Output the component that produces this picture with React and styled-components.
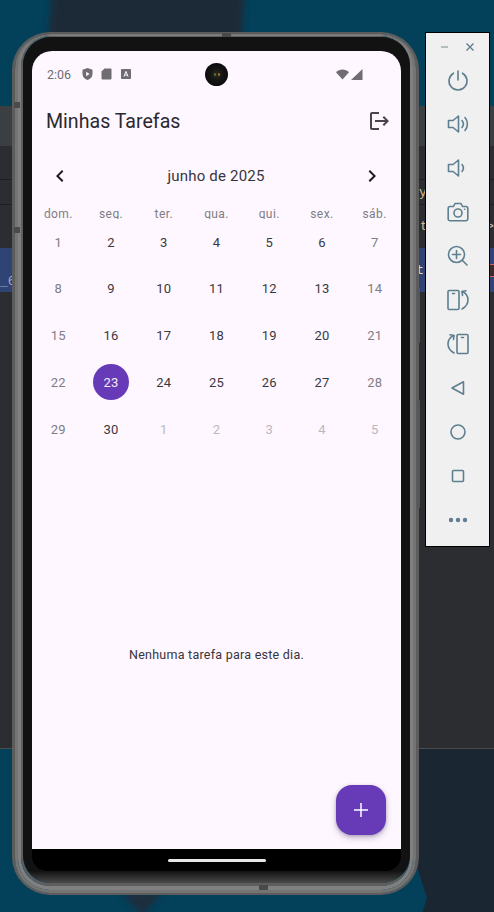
import React from "react";
import styled, { createGlobalStyle } from "styled-components";

const Global = createGlobalStyle`
  html, body { margin: 0; padding: 0; background: #02415a; }
  * { box-sizing: border-box; }
`;

const Desktop = styled.div`
  position: relative;
  width: 494px;
  height: 912px;
  overflow: hidden;
  font-family: Roboto, "Liberation Sans", sans-serif;
`;
const Wallpaper = styled.svg`
  position: absolute;
  inset: 0;
`;

/* IDE window behind the emulator */
const IdeWindow = styled.div`
  position: absolute;
  left: 0;
  top: 106px;
  width: 494px;
  height: 643px;
  background: #2b2d30;
  border-bottom: 1px solid #4a4c4f;
  display: flex;
  flex-direction: column;
  font-family: "Liberation Mono", monospace;
  font-size: 13px;
`;
const IdeToolbar = styled.div`
  height: 40px;
  background: #3c3f41;
`;
const IdeRow = styled.div`
  height: ${(p) => p.$h}px;
  background: ${(p) => p.$bg || "#2b2d30"};
  border-bottom: ${(p) => (p.$line ? "1px solid #1e1f22" : "none")};
  display: flex;
  align-items: center;
  justify-content: space-between;
  padding-left: ${(p) => p.$pl || 0}px;
  color: ${(p) => p.$color || "#b4b8bf"};
`;
const RedMark = styled.span`
  width: 4px;
  height: 13px;
  background: #3c2a2c;
  border-top: 1px solid #d8605c;
  border-bottom: 1px solid #d8605c;
`;
const Fragment = styled.span`
  color: ${(p) => p.$color || "#dfe1e5"};
`;
const BandLabel = styled.span`
  align-self: flex-end;
  padding-bottom: 3px;
`;
const BandFragment = styled.span`
  margin-left: auto;
  margin-right: 66px;
  color: #e6dcc8;
`;

/* Phone */
const Rim = styled.div`
  background: transparent;
  border-style: solid;
  border-color: ${(p) => p.$c};
  border-width: ${(p) => p.$w};
  border-radius: ${(p) => p.$r}px;
`;
const PhoneSpot = styled.div`
  position: absolute;
  left: 12px;
  top: 32px;
  width: 407px;
  height: 863px;
`;
const SideButton = styled.div`
  position: absolute;
  left: 405px;
  top: ${(p) => p.$top}px;
  width: 3px;
  height: ${(p) => p.$h}px;
  background: #55575a;
  border-radius: 1px;
`;
const AntennaBand = styled.div`
  position: absolute;
  background: #4a4a4a;
  left: ${(p) => p.$x}px;
  top: ${(p) => p.$y}px;
  width: ${(p) => p.$w}px;
  height: ${(p) => p.$hh}px;
`;
const Bezel = styled.div`
  padding: 14px 9px 12px 9px;
  border-radius: 28px;
  background: linear-gradient(to bottom, #121212 0, #121212 calc(100% - 12px), #4a4a4a 100%);
`;
const ScreenClip = styled.div`
  width: 369px;
  height: 820px;
  border-radius: 20px 20px 15px 15px;
  overflow: hidden;
  background: #000;
  display: flex;
  flex-direction: column;
`;
const Screen = styled.div`
  position: relative;
  height: 798px;
  background: #fef7ff;
  display: flex;
  flex-direction: column;
  color: #1d1b20;
`;
const NavBar = styled.div`
  flex: 1;
  display: flex;
  align-items: center;
  justify-content: center;
`;
const NavHandle = styled.div`
  width: 98px;
  height: 3px;
  border-radius: 2px;
  background: #e6e6e6;
`;
const StatusBar = styled.div`
  height: 46px;
  display: flex;
  align-items: center;
  padding: 0 38px 0 15px;
  position: relative;
  color: #6f6c72;
`;
const Clock = styled.span`
  font-size: 12.5px;
  width: 35px;
`;
const StatusIcons = styled.div`
  display: flex;
  align-items: center;
  gap: 8px;
`;
const StatusRight = styled.div`
  margin-left: auto;
  display: flex;
  align-items: center;
  gap: 2px;
`;
const Camera = styled.div`
  position: absolute;
  left: 173px;
  top: 11.5px;
  width: 23px;
  height: 23px;
  border-radius: 50%;
  background: radial-gradient(circle, #2b2a20 0, #141414 40%, #050505 100%);
  display: flex;
  align-items: center;
  justify-content: center;
  gap: 2px;
`;
const Lens = styled.i`
  width: 2px;
  height: 3px;
  border-radius: 1px;
  background: ${(p) => p.$c};
`;
const AppBar = styled.div`
  height: 48px;
  display: flex;
  align-items: center;
  justify-content: space-between;
  padding: 0 10px 0 14px;
`;
const Title = styled.h1`
  margin: 0;
  padding-top: 1px;
  font-size: 19.6px;
  font-weight: 400;
  color: #2a2830;
`;
const Calendar = styled.div`
  margin-top: 7px;
  display: flex;
  flex-direction: column;
`;
const MonthHeader = styled.div`
  height: 48px;
  display: flex;
  align-items: center;
  justify-content: space-between;
  padding: 0 17px 0 16px;
  margin-bottom: 5px;
`;
const MonthLabel = styled.span`
  font-size: 15px;
  letter-spacing: 0.2px;
  color: #37353b;
`;
const Week = styled.div`
  display: grid;
  grid-template-columns: repeat(7, 1fr);
  height: 14px;
  margin-bottom: 4px;
  overflow: hidden;
  line-height: 18px;
  text-align: center;
  font-size: 12px;
  letter-spacing: 0.4px;
  color: #807d84;
`;
const Days = styled.div`
  display: grid;
  grid-template-columns: repeat(7, 1fr);
  grid-auto-rows: 36px;
  row-gap: 10.75px;
  margin-top: 1px;
`;
const Day = styled.div`
  justify-self: center;
  width: 36px;
  height: 36px;
  border-radius: 50%;
  display: flex;
  align-items: center;
  justify-content: center;
  font-size: 13px;
  letter-spacing: 0.2px;
  background: ${(p) => (p.$selected ? "#673ab7" : "transparent")};
  color: ${(p) =>
    p.$selected ? "#f3ecfb" : p.$outside ? "#bbb8bd" : p.$weekend ? "#807d84" : "#3a383f"};
`;
const EmptyArea = styled.div`
  flex: 1;
  display: flex;
  align-items: center;
  justify-content: center;
  padding-top: 12px;
  font-size: 12.5px;
  letter-spacing: 0.25px;
  color: #37353b;
`;
const Fab = styled.button`
  position: absolute;
  right: 15px;
  bottom: 14px;
  width: 50px;
  height: 50px;
  border: none;
  padding: 0;
  border-radius: 16px;
  background: #673ab7;
  box-shadow: 0 3px 6px rgba(60, 40, 90, 0.28), 0 1px 3px rgba(60, 40, 90, 0.25);
  display: flex;
  align-items: center;
  justify-content: center;
`;

/* Emulator side toolbar */
const SidePanel = styled.div`
  position: absolute;
  left: 425px;
  top: 32px;
  width: 65px;
  height: 515px;
  background: #f0f0f0;
  border: 1px solid #000;
  display: flex;
  flex-direction: column;
  align-items: center;
`;
const PanelHead = styled.div`
  height: 25px;
  width: 100%;
  display: flex;
  align-items: center;
  justify-content: space-between;
  padding: 3px 14px 0 14px;
`;
const ToolButton = styled.div`
  width: 44px;
  height: 44px;
  display: flex;
  align-items: center;
  justify-content: center;
`;

const tool = { fill: "none", stroke: "#5e7f90", strokeWidth: 1.6, strokeLinecap: "round", strokeLinejoin: "round" };
const ToolIcon = ({ children }) => (
  <ToolButton>
    <svg width="26" height="26" viewBox="0 0 26 26" {...tool}>
      {children}
    </svg>
  </ToolButton>
);

const weekNames = ["dom.", "seg.", "ter.", "qua.", "qui.", "sex.", "sáb."];
const cells = [];
for (let i = 1; i <= 30; i++) cells.push({ n: i, outside: false });
for (let i = 1; i <= 5; i++) cells.push({ n: i, outside: true });

export default function App() {
  return (
    <Desktop>
      <Global />
      <Wallpaper width="494" height="912" viewBox="0 0 494 912">
        <defs>
          <filter id="soft"><feGaussianBlur stdDeviation="3" /></filter>
        </defs>
        <rect width="494" height="912" fill="#03405a" />
        <g filter="url(#soft)">
          <polygon points="52,-10 245,-10 240,60 225,110 70,110 48,40" fill="#1d2b38" />
          <polygon points="122,893 162,893 142,916" fill="#1f2d3c" />
        </g>
        <polygon points="410,745 500,745 500,920 420,920 427,898 418,870" fill="#1a2733" />
      </Wallpaper>

      <IdeWindow>
        <IdeToolbar />
        <IdeRow $h={34} $line />
        <IdeRow $h={25} $line $pl={419}>
          <Fragment $color="#d8c08a">yp</Fragment>
        </IdeRow>
        <IdeRow $h={43} $pl={420}>
          <Fragment $color="#e6b98a">t</Fragment>
          <Fragment $color="#b9bcc2">&gt;</Fragment>
        </IdeRow>
        <IdeRow $h={44} $bg="#2f4374" $color="#9aa9c9">
          <BandLabel>_6</BandLabel>
          <BandFragment>t</BandFragment>
          <RedMark />
        </IdeRow>
      </IdeWindow>

      <PhoneSpot>
        <SideButton $top={256} $h={55} />
        <SideButton $top={368} $h={108} />
        <Rim $c="#5c5c5c" $w="2px 3px 2px 3px" $r={38}>
          <Rim $c="#747474" $w="1px 3px 3px 3px" $r={35}>
            <Rim $c="#808080" $w="1px 3px 4px 3px" $r={32}>
              <Rim $c="#5e5e5e" $w="1px 0 3px 2px" $r={29}>
                <Bezel>
                  <ScreenClip>
                    <Screen>
                      <StatusBar>
                        <Clock>2:06</Clock>
                        <StatusIcons>
                          <svg width="11" height="12" viewBox="0 0 11 12">
                            <path d="M5.5 0 10.5 1.8V6c0 2.8-2 5-5 6-3-1-5-3.2-5-6V1.8z" fill="#6f6c72" />
                            <path d="M4.2 3.8 7.6 6 4.2 8.2z" fill="#fef7ff" />
                          </svg>
                          <svg width="11" height="12" viewBox="0 0 11 12">
                            <path d="M3.5 0.5H9.5a1 1 0 0 1 1 1V10.5a1 1 0 0 1-1 1H1.5a1 1 0 0 1-1-1V3.5z" fill="#6f6c72" />
                          </svg>
                          <svg width="10" height="10" viewBox="0 0 10 10" style={{ marginLeft: 1 }}>
                            <rect width="10" height="10" rx="1" fill="#6f6c72" />
                            <path d="M3 7.6 5 2.4 7 7.6M3.8 6h2.4" fill="none" stroke="#fef7ff" strokeWidth="1" />
                          </svg>
                        </StatusIcons>
                        <Camera>
                          <Lens $c="#5d6a3a" />
                          <Lens $c="#9a6a30" />
                        </Camera>
                        <StatusRight>
                          <svg width="13" height="11" viewBox="0 0 13 11">
                            <path d="M0 3.2C1.8 1.4 4 .4 6.5.4S11.2 1.4 13 3.2L6.5 10.6z" fill="#6f6c72" />
                          </svg>
                          <svg width="12" height="11" viewBox="0 0 12 11">
                            <path d="M11.5 0V11H0z" fill="#6f6c72" />
                          </svg>
                        </StatusRight>
                      </StatusBar>

                      <AppBar>
                        <Title>Minhas Tarefas</Title>
                        <svg width="24" height="24" viewBox="0 0 24 24" fill="#49454f">
                          <path d="M17 7l-1.41 1.41L18.17 11H8v2h10.17l-2.58 2.58L17 17l5-5zM5 5h7V3H5c-1.1 0-2 .9-2 2v14c0 1.1.9 2 2 2h7v-2H5V5z" />
                        </svg>
                      </AppBar>

                      <Calendar>
                        <MonthHeader>
                          <svg width="24" height="24" viewBox="0 0 24 24" fill="#1d1b20">
                            <path d="M15.41 7.41L14 6l-6 6 6 6 1.41-1.41L10.83 12z" />
                          </svg>
                          <MonthLabel>junho de 2025</MonthLabel>
                          <svg width="24" height="24" viewBox="0 0 24 24" fill="#1d1b20">
                            <path d="M10 6L8.59 7.41 13.17 12l-4.58 4.59L10 18l6-6z" />
                          </svg>
                        </MonthHeader>
                        <Week>
                          {weekNames.map((w) => (
                            <span key={w}>{w}</span>
                          ))}
                        </Week>
                        <Days>
                          {cells.map((c, i) => (
                            <Day
                              key={i}
                              $outside={c.outside}
                              $weekend={i % 7 === 0 || i % 7 === 6}
                              $selected={!c.outside && c.n === 23}
                            >
                              {c.n}
                            </Day>
                          ))}
                        </Days>
                      </Calendar>

                      <EmptyArea>Nenhuma tarefa para este dia.</EmptyArea>

                      <Fab aria-label="Adicionar">
                        <svg width="24" height="24" viewBox="0 0 24 24" fill="#fff">
                          <path d="M19 12.75h-6.25V19h-1.5v-6.25H5v-1.5h6.25V5h1.5v6.25H19z" />
                        </svg>
                      </Fab>
                    </Screen>
                    <NavBar>
                      <NavHandle />
                    </NavBar>
                  </ScreenClip>
                </Bezel>
              </Rim>
            </Rim>
          </Rim>
        </Rim>
        <AntennaBand $x={2} $y={70} $w={6} $hh={6} />
        <AntennaBand $x={2} $y={195} $w={6} $hh={6} />
        <AntennaBand $x={210} $y={1} $w={9} $hh={4} />
        <AntennaBand $x={247} $y={853} $w={9} $hh={5} />
      </PhoneSpot>

      <SidePanel>
        <PanelHead>
          <svg width="10" height="10" viewBox="0 0 10 10" stroke="#9aa7ae" strokeWidth="1.4">
            <path d="M1 5h7" />
          </svg>
          <svg width="10" height="10" viewBox="0 0 10 10" stroke="#5e7f90" strokeWidth="1.4">
            <path d="M1.5 1.5 8.5 8.5M8.5 1.5 1.5 8.5" />
          </svg>
        </PanelHead>
        <ToolIcon>
          <path d="M13 4v9" />
          <path d="M8.5 6.2a9 9 0 1 0 9 0" />
        </ToolIcon>
        <ToolIcon>
          <path d="M3.5 9.5H8L13.5 5v16L8 16.5H3.5z" />
          <path d="M17 9.5a5.5 5.5 0 0 1 0 7" />
          <path d="M20 6.5a10 10 0 0 1 0 13" />
        </ToolIcon>
        <ToolIcon>
          <path d="M3.5 9.5H8L13.5 5v16L8 16.5H3.5z" />
          <path d="M17 9.5a5.5 5.5 0 0 1 0 7" />
        </ToolIcon>
        <ToolIcon>
          <path d="M5 7.5h3.5L10 4.5h6l1.5 3H21a1.8 1.8 0 0 1 1.8 1.8V20a1.8 1.8 0 0 1-1.8 1.8H5A1.8 1.8 0 0 1 3.2 20V9.3A1.8 1.8 0 0 1 5 7.5z" />
          <circle cx="13" cy="14" r="4" />
          <path d="M19.5 10.2h.2" />
        </ToolIcon>
        <ToolIcon>
          <circle cx="11.5" cy="11.5" r="8" />
          <path d="M17.5 17.5 22 22M11.5 7.5v8M7.5 11.5h8" />
        </ToolIcon>
        <ToolIcon>
          <rect x="3" y="3.5" width="11" height="19" rx="1.2" />
          <path d="M7.5 6.5h2" />
          <path d="M17 4.5c4 1.5 6 4.5 6 8.5s-2.5 7-6 9" />
          <path d="M17.5 8.5 17 4.5l4-.8" />
        </ToolIcon>
        <ToolIcon>
          <rect x="12" y="3.5" width="11" height="19" rx="1.2" />
          <path d="M16.5 6.5h2" />
          <path d="M9 4.5C5 6 3 9 3 13s2.5 7 6 9" />
          <path d="M8.5 8.5 9 4.5l-4-.8" />
        </ToolIcon>
        <ToolIcon>
          <path d="M7 13 18.5 6.8v12.4z" />
        </ToolIcon>
        <ToolIcon>
          <circle cx="13" cy="13" r="7" />
        </ToolIcon>
        <ToolIcon>
          <rect x="7.5" y="7.5" width="11" height="11" rx="1" />
        </ToolIcon>
        <ToolIcon>
          <circle cx="6" cy="13" r="1.4" fill="#5e7f90" />
          <circle cx="13" cy="13" r="1.4" fill="#5e7f90" />
          <circle cx="20" cy="13" r="1.4" fill="#5e7f90" />
        </ToolIcon>
      </SidePanel>
    </Desktop>
  );
}
